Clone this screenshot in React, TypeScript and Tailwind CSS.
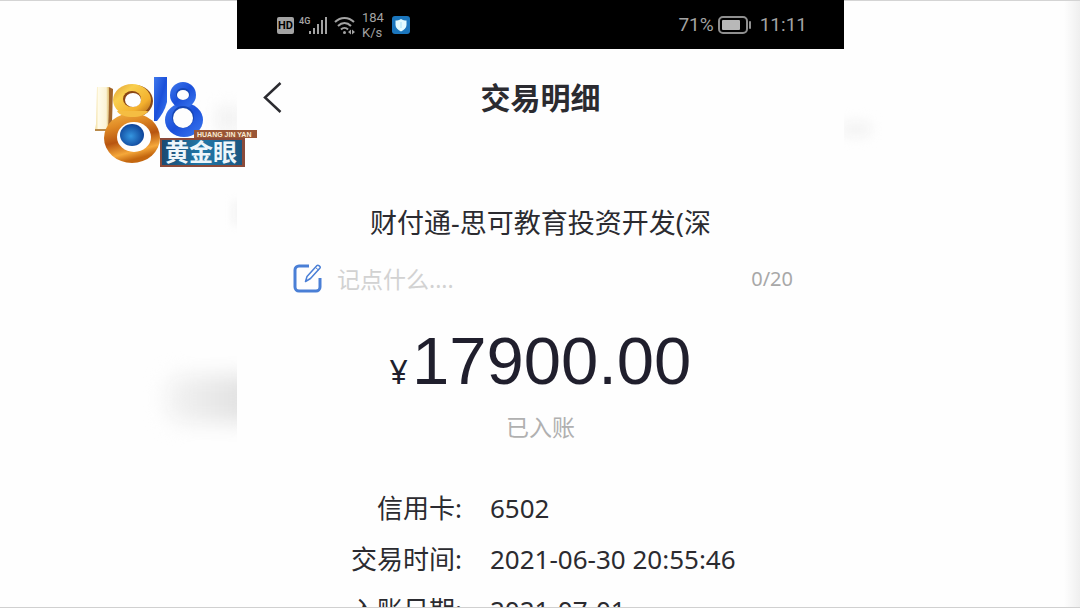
import { useState } from "react";

const DETAILS = [
  { label: "信用卡:", value: "6502" },
  { label: "交易时间:", value: "2021-06-30 20:55:46" },
  { label: "入账日期:", value: "2021-07-01" },
];

const NOTE_LIMIT = 20;

function SignalIcon() {
  return (
    <svg width="32" height="20" viewBox="0 0 32 20" fill="#a3a3a3" aria-hidden="true">
      <text x="1" y="9" fontSize="9" fontWeight="600" fontFamily="Roboto, sans-serif">
        4G
      </text>
      <rect x="11" y="16" width="2" height="3" />
      <rect x="15" y="13" width="2" height="6" />
      <rect x="19" y="9" width="2" height="10" />
      <rect x="23" y="5" width="2" height="14" />
      <rect x="27" y="2" width="2" height="17" />
    </svg>
  );
}

function WifiIcon() {
  return (
    <svg width="22" height="20" viewBox="0 0 22 20" fill="none" stroke="#a3a3a3" strokeWidth="2" aria-hidden="true">
      <path d="M1 7C6.500 1.500 14.500 1.500 20 7" />
      <path d="M4 11c4-4 9-4 13 0" />
      <path d="M7 14.500c2-2 5-2 7 0" />
      <circle cx="10.500" cy="17.500" r="1.500" fill="#a3a3a3" stroke="none" />
      <path d="M17 14.500l-3 2.500 3 2.500zM18 14.500l3 2.500-3 2.500z" fill="#a3a3a3" stroke="none" />
    </svg>
  );
}

function ShieldIcon() {
  return (
    <svg width="18" height="18" viewBox="0 0 18 18" aria-hidden="true">
      <rect width="18" height="18" rx="3" fill="#1b76bd" />
      <path d="M9 3c2 1 3.500 1.500 5.500 1.500V9c0 3-2.500 5-5.500 6.500C6 14 3.500 12 3.500 9V4.500C5.500 4.500 7 4 9 3z" fill="#e4fbff" />
      <path d="M9 6v6" stroke="#a9e0f5" />
    </svg>
  );
}

function BatteryIcon() {
  return (
    <svg width="34" height="18" viewBox="0 0 34 18" aria-hidden="true">
      <rect x="1" y="1" width="28" height="16" rx="4" fill="none" stroke="#8f8f8f" strokeWidth="2" />
      <rect x="4" y="4" width="18" height="10" rx="1" fill="#b8b8b8" />
      <rect x="31" y="5" width="2" height="8" rx="1" fill="#8f8f8f" />
    </svg>
  );
}

function EditIcon() {
  return (
    <svg width="30" height="30" viewBox="0 0 30 30" fill="none" stroke="#4a7fd6" aria-hidden="true">
      <path d="M16 2H6a4 4 0 0 0-4 4v17a4 4 0 0 0 4 4h17a4 4 0 0 0 4-4V14" strokeWidth="3" />
      <path d="M12.500 17.500l1.500-5L24 1.500c1-1 4 1 3 2.500L17.500 14.500z" strokeWidth="1.500" strokeLinejoin="round" />
      <path d="M22.500 3.500l3 2.500" strokeWidth="1" />
    </svg>
  );
}

function ChannelLogo() {
  return (
    <svg
      className="absolute top-[72px] left-[92px] z-10"
      width="168"
      height="98"
      viewBox="92 72 168 98"
      role="img"
      aria-label="1818 黄金眼"
    >
      <defs>
        <linearGradient id="cream" x1="0" y1="0" x2="1" y2="0">
          <stop offset="0" stopColor="#f0d88e" />
          <stop offset="0.25" stopColor="#fffbe9" />
          <stop offset="0.8" stopColor="#fbf3d6" />
          <stop offset="1" stopColor="#dcb85e" />
        </linearGradient>
        <linearGradient id="gold" x1="0" y1="0" x2="1" y2="1">
          <stop offset="0" stopColor="#dd9a35" />
          <stop offset="0.3" stopColor="#f9cf4e" />
          <stop offset="0.7" stopColor="#f3b02e" />
          <stop offset="1" stopColor="#a85a14" />
        </linearGradient>
        <linearGradient id="amber" x1="0" y1="0" x2="0.300" y2="1">
          <stop offset="0" stopColor="#f3b648" />
          <stop offset="0.3" stopColor="#e08a25" />
          <stop offset="0.6" stopColor="#b85510" />
          <stop offset="0.85" stopColor="#f5a83a" />
          <stop offset="1" stopColor="#c4670f" />
        </linearGradient>
        <linearGradient id="blue" x1="0" y1="0" x2="1" y2="1">
          <stop offset="0" stopColor="#3f78ec" />
          <stop offset="0.5" stopColor="#1b50da" />
          <stop offset="1" stopColor="#3d7af0" />
        </linearGradient>
        <radialGradient id="eye" cx="0.45" cy="0.55" r="0.6">
          <stop offset="0" stopColor="#3596e0" />
          <stop offset="1" stopColor="#0b3c92" />
        </radialGradient>
        <linearGradient id="banner" x1="0" y1="0" x2="1" y2="0">
          <stop offset="0" stopColor="#1b4a72" />
          <stop offset="0.5" stopColor="#2178a8" />
          <stop offset="1" stopColor="#1c5680" />
        </linearGradient>
      </defs>

      {/* gold half */}
      <path d="M109 87l4 2-1 34-4 6z" fill="#a0642a" />
      <path d="M97 87h12l-1 43H95l1-6z" fill="url(#cream)" />
      <path d="M95 129h13v2H95z" fill="#b98a4a" />
      <ellipse cx="135" cy="101" rx="18" ry="16" fill="#8a4a18" />
      <ellipse cx="132" cy="100" rx="19" ry="16" fill="url(#gold)" />
      <ellipse cx="132" cy="138" rx="28" ry="25" fill="url(#amber)" />
      <path d="M117 111h31c-4 8-27 8-31 0z" fill="#f5bd42" />
      <ellipse cx="132" cy="99" rx="9" ry="8" fill="#8a4513" />
      <ellipse cx="133" cy="100" rx="8" ry="7" fill="#fefefe" />
      <ellipse cx="134" cy="137" rx="17" ry="15" fill="#fefefe" />
      <ellipse cx="132" cy="135" rx="12" ry="11" fill="url(#eye)" />

      {/* blue half */}
      <path d="M154 77h13v25c-2 8-6 14-10 19h-3z" fill="url(#blue)" />
      <ellipse cx="184" cy="120" rx="19" ry="17" fill="url(#blue)" />
      <ellipse cx="183" cy="95" rx="13" ry="13" fill="url(#blue)" />
      <ellipse cx="183" cy="94" rx="7" ry="6" fill="#1646b4" />
      <ellipse cx="183" cy="95" rx="6" ry="5" fill="#fefefe" />
      <ellipse cx="183" cy="117" rx="11" ry="11" fill="#1646b4" />
      <ellipse cx="183" cy="118" rx="10" ry="10" fill="#fefefe" />

      {/* name plate */}
      <path d="M160 138h85v29h-85z" fill="#8a4a3a" />
      <path d="M162 140h80v25h-80z" fill="url(#banner)" />
      <rect x="194" y="130" width="63" height="8" fill="#9a5636" />
      <text x="197" y="137" fontSize="7" fontWeight="700" fill="#f8ead4" fontFamily="'Liberation Sans', sans-serif">
        HUANG JIN YAN
      </text>
      <text x="165" y="161" fontSize="24" fontWeight="700" fill="#edf6fb" fontFamily="'Noto Sans CJK SC', sans-serif">
        黄金眼
      </text>
    </svg>
  );
}

function StatusBar() {
  return (
    <div className="flex h-[49px] items-center justify-between bg-black pt-px pr-[37px] pl-10 font-[Roboto,sans-serif] text-[#a3a3a3]">
      <div className="flex items-center">
        <span className="mr-1 flex h-[17px] w-[17px] items-center justify-center rounded-xs bg-[#a3a3a3] pt-px text-[11px] leading-4 font-bold text-black">
          HD
        </span>
        <SignalIcon />
        <span className="ml-1">
          <WifiIcon />
        </span>
        <span className="ml-1.5 w-[30px] text-[13px] leading-[15px]">
          184
          <br />
          K/s
        </span>
        <ShieldIcon />
      </div>
      <div className="flex items-center text-[19px]">
        <span>71%</span>
        <span className="mr-2 ml-1">
          <BatteryIcon />
        </span>
        <time>11:11</time>
      </div>
    </div>
  );
}

function TransactionScreen() {
  const [note, setNote] = useState("");

  return (
    <main className="relative min-w-0 bg-[#fefefe] text-[#2b2b30]">
      <StatusBar />

      {/* Header */}
      <header className="grid h-24 grid-cols-[1fr_auto_1fr] items-center px-6">
        <button type="button" aria-label="返回" className="w-6">
          <svg width="24" height="32" viewBox="0 0 24 32" fill="none" stroke="#2b2b30" strokeWidth="2.500" aria-hidden="true">
            <path d="M19.500 2L4 16.500 19.500 31" />
          </svg>
        </button>
        <h1 className="text-[30px] font-bold">交易明细</h1>
      </header>

      <h2 className="mt-[58px] text-center text-[27px] leading-10">财付通-思可教育投资开发(深</h2>

      {/* Note */}
      <div className="mt-[18px] flex h-9 items-center pr-[51px] pl-14">
        <label htmlFor="note" aria-label="备注" className="mr-3.5">
          <EditIcon />
        </label>
        <input
          id="note"
          value={note}
          maxLength={NOTE_LIMIT}
          onChange={(e) => setNote(e.target.value)}
          placeholder="记点什么...."
          className="min-w-0 flex-1 text-[23px] leading-9 outline-none placeholder:text-[#d2d2d2]"
        />
        <span className="text-[20px] text-[#a8a8a8]">
          {note.length}/{NOTE_LIMIT}
        </span>
      </div>

      {/* Amount */}
      <p className="mt-6 flex h-20 items-baseline justify-center gap-1 text-[#201f2d]">
        <span className="text-[32px] leading-none">¥</span>
        <span className="font-['Liberation_Sans',sans-serif] text-[67px] leading-[80px]">17900.00</span>
      </p>
      <p className="mt-2 text-center text-[23px] leading-9 text-[#b0b0b0]">已入账</p>

      <table className="mt-[38px] ml-[114px] text-[26px] leading-[51px] whitespace-nowrap">
        <tbody>
          {DETAILS.map((row) => (
            <tr key={row.label}>
              <th scope="row" className="p-0 text-right font-normal">
                {row.label}
              </th>
              <td className="p-0 pl-7">{row.value}</td>
            </tr>
          ))}
        </tbody>
      </table>
    </main>
  );
}

export default function App() {
  return (
    <div className="relative grid h-screen grid-cols-[237fr_607fr_236fr] overflow-hidden bg-[#fefefe] font-['Noto_Sans','Noto_Sans_CJK_SC',sans-serif]">
      <div className="relative overflow-hidden border-t border-[#d4d4d4]" aria-hidden="true">
        <div className="absolute top-[106px] -right-1 h-6 w-6 bg-[#f1f1f1] blur-[8px]" />
        <div className="absolute top-[200px] -right-1 h-6 w-2 bg-[#f2f2f2] blur-xs" />
        <div className="absolute top-[374px] -right-6 h-12 w-24 rounded-2xl bg-linear-to-r from-[#f4f4f4] to-[#dedede] blur-[10px]" />
      </div>
      <TransactionScreen />
      <div className="relative overflow-hidden border-t border-[#d4d4d4]" aria-hidden="true">
        <div className="absolute top-[120px] -left-1 h-4 w-8 rounded-full bg-[#f4f4f4] blur-[6px]" />
        <div className="absolute inset-y-0 right-0 w-4 bg-linear-to-r from-[#fefefe] to-[#efefef]" />
      </div>
      <ChannelLogo />
      <div className="absolute inset-x-0 bottom-0 h-px bg-[#d0d0d0]" />
    </div>
  );
}
